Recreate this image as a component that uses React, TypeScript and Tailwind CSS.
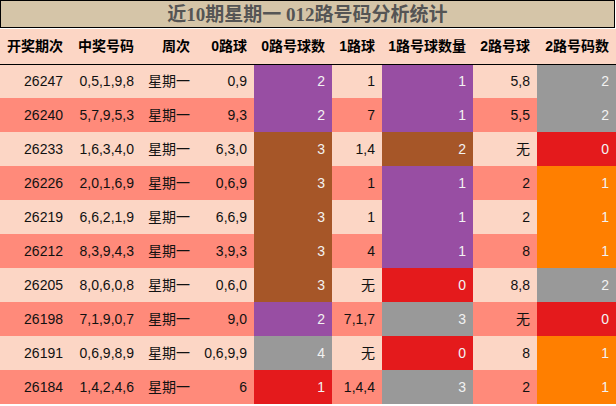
import React from "react";

const P = "bg-[#984ea3]";
const B = "bg-[#a65628]";
const R = "bg-[#e41a1c]";
const G = "bg-[#999999]";
const O = "bg-[#ff7f00]";

type Row = [string, string, string, string, string, string, string, string, string, string];
// id, nums, week, r0, c0, color0, r1, c1, color1, r2, c2, color2
const rows: [string, string, string, string, string, string, string, string, string, string, string][] = [
  ["26247", "0,5,1,9,8", "0,9", "2", P, "1", "1", P, "5,8", "2", G],
  ["26240", "5,7,9,5,3", "9,3", "2", P, "7", "1", P, "5,5", "2", G],
  ["26233", "1,6,3,4,0", "6,3,0", "3", B, "1,4", "2", B, "无", "0", R],
  ["26226", "2,0,1,6,9", "0,6,9", "3", B, "1", "1", P, "2", "1", O],
  ["26219", "6,6,2,1,9", "6,6,9", "3", B, "1", "1", P, "2", "1", O],
  ["26212", "8,3,9,4,3", "3,9,3", "3", B, "4", "1", P, "8", "1", O],
  ["26205", "8,0,6,0,8", "0,6,0", "3", B, "无", "0", R, "8,8", "2", G],
  ["26198", "7,1,9,0,7", "9,0", "2", P, "7,1,7", "3", G, "无", "0", R],
  ["26191", "0,6,9,8,9", "0,6,9,9", "4", G, "无", "0", R, "8", "1", O],
  ["26184", "1,4,2,4,6", "6", "1", R, "1,4,4", "3", G, "2", "1", O],
];

const widths = [70, 71, 56, 57, 78, 50, 91, 64, 79];
const heads = ["开奖期次", "中奖号码", "周次", "0路球", "0路号球数", "1路球", "1路号球数量", "2路号球", "2路号码数"];

export default function App() {
  return (
    <div
      className="w-[616px] h-[406px] bg-white overflow-hidden"
      style={{ fontFamily: '"Liberation Sans", "Noto Sans CJK SC", sans-serif' }}
    >
      <div
        className="h-[28px] w-[615px] border border-black bg-[#d5c5a8] flex items-center justify-center text-[19px] font-bold text-[#555555] leading-none"
        style={{ fontFamily: '"Liberation Serif", "Noto Sans CJK SC", serif' }}
      >
        近10期星期一 012路号码分析统计
      </div>
      <table className="mt-[1px] w-[616px] table-fixed border-collapse text-[14px] leading-none">
        <colgroup>
          {widths.map((w, i) => (
            <col key={i} style={{ width: w }} />
          ))}
        </colgroup>
        <thead>
          <tr className="h-[35px] bg-[#fcd6c5] border-b border-black">
            {heads.map((h, i) => (
              <th key={i} className="text-right pr-[7px] font-bold text-black whitespace-nowrap p-0">
                {h}
              </th>
            ))}
          </tr>
        </thead>
        <tbody>
          {rows.map((r, i) => {
            const bg = i % 2 === 0 ? "bg-[#fcd6c5]" : "bg-[#ff8a7a]";
            const plain = "text-right pr-[7px] text-[#111111] whitespace-nowrap p-0";
            const colored = "text-right pr-[7px] text-[#f2f2f2] whitespace-nowrap p-0";
            return (
              <tr key={i} className={`h-[34px] ${bg}`}>
                <td className={plain}>{r[0]}</td>
                <td className={plain}>{r[1]}</td>
                <td className={plain}>星期一</td>
                <td className={plain}>{r[2]}</td>
                <td className={`${colored} ${r[4]}`}>{r[3]}</td>
                <td className={plain}>{r[5]}</td>
                <td className={`${colored} ${r[7]}`}>{r[6]}</td>
                <td className={plain}>{r[8]}</td>
                <td className={`${colored} ${r[10]}`}>{r[9]}</td>
              </tr>
            );
          })}
        </tbody>
      </table>
    </div>
  );
}
